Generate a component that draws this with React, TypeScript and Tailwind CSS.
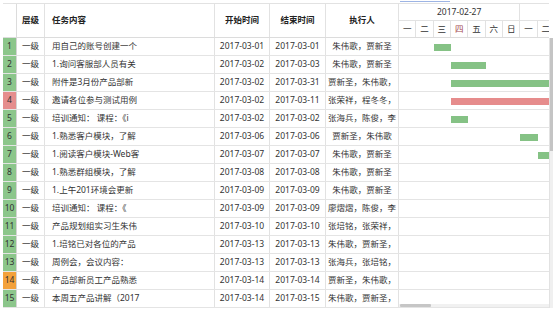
const rows = [
  { n: 1, task: "用自己的账号创建一个", s: "2017-03-01", e: "2017-03-01", who: "朱伟歌，贾新圣", c: "g" },
  { n: 2, task: "1.询问客服部人员有关", s: "2017-03-02", e: "2017-03-03", who: "朱伟歌，贾新圣", c: "g" },
  { n: 3, task: "附件是3月份产品部新", s: "2017-03-02", e: "2017-03-31", who: "贾新圣，朱伟歌，", c: "g" },
  { n: 4, task: "邀请各位参与测试用例", s: "2017-03-02", e: "2017-03-11", who: "张荣祥，程冬冬，", c: "r" },
  { n: 5, task: "培训通知： 课程：《i", s: "2017-03-02", e: "2017-03-02", who: "张海兵，陈俊，李", c: "g" },
  { n: 6, task: "1.熟悉客户模块，了解", s: "2017-03-06", e: "2017-03-06", who: "贾新圣，朱伟歌", c: "g" },
  { n: 7, task: "1.阅读客户模块-Web客", s: "2017-03-07", e: "2017-03-07", who: "朱伟歌，贾新圣", c: "g" },
  { n: 8, task: "1.熟悉群组模块，了解", s: "2017-03-08", e: "2017-03-08", who: "朱伟歌，贾新圣", c: "g" },
  { n: 9, task: "1.上午201环境会更新", s: "2017-03-09", e: "2017-03-09", who: "朱伟歌，贾新圣", c: "g" },
  { n: 10, task: "培训通知： 课程：《", s: "2017-03-09", e: "2017-03-09", who: "廖熠熠，陈俊，李", c: "g" },
  { n: 11, task: "产品规划组实习生朱伟", s: "2017-03-10", e: "2017-03-10", who: "张培铭，张荣祥，", c: "g" },
  { n: 12, task: "1.培铭已对各位的产品", s: "2017-03-13", e: "2017-03-13", who: "朱伟歌，贾新圣，", c: "g" },
  { n: 13, task: "周例会，会议内容：", s: "2017-03-13", e: "2017-03-13", who: "张海兵，张培铭，", c: "g" },
  { n: 14, task: "产品部新员工产品熟悉", s: "2017-03-14", e: "2017-03-14", who: "贾新圣，朱伟歌，", c: "o" },
  { n: 15, task: "本周五产品讲解（2017", s: "2017-03-14", e: "2017-03-15", who: "朱伟歌，贾新圣，", c: "g" },
];

const DAY = 52 / 3;
const days = ["一", "二", "三", "四", "五", "六", "日", "一", "二"];

// days since 2017-02-27
function offset(d: string) {
  const t = new Date(d + "T00:00:00Z").getTime();
  const base = new Date("2017-02-27T00:00:00Z").getTime();
  return Math.round((t - base) / 86400000);
}

const numBg: Record<string, string> = {
  g: "bg-[#8cc68b]",
  r: "bg-[#e58d8d]",
  o: "bg-[#f3a13b]",
};

export default function App() {
  return (
    <div
      className="w-[557px] h-[310px] bg-white overflow-hidden text-[8.5px] text-[#333]"
      style={{ fontFamily: '"Noto Sans", "Noto Sans CJK SC", sans-serif' }}
    >
      <div className="flex pt-[3px] pl-[3px]">
        {/* left grid */}
        <div className="w-[396px] border-t border-[#e2e2e2]">
          <div className="grid grid-cols-[14px_28px_170px_55px_56px_73px] h-[34px] font-bold text-[#222] border-b border-[#dcdcdc]">
            <div className="border-r border-[#dcdcdc]" />
            <div className="flex items-center justify-center border-r border-[#e2e2e2]">层级</div>
            <div className="flex items-center pl-[7px] border-r border-[#e2e2e2]">任务内容</div>
            <div className="flex items-center justify-center border-r border-[#e2e2e2]">开始时间</div>
            <div className="flex items-center justify-center border-r border-[#e2e2e2]">结束时间</div>
            <div className="flex items-center justify-center border-r border-[#e2e2e2]">执行人</div>
          </div>
          {rows.map((r) => (
            <div
              key={r.n}
              className="grid grid-cols-[14px_28px_170px_55px_56px_73px] h-[18px] border-b border-[#e4e4e4]"
            >
              <div className={`flex items-center justify-center border-r border-[#d4d4d4] ${numBg[r.c]}`}>{r.n}</div>
              <div className="flex items-center justify-center border-r border-[#e2e2e2]">一级</div>
              <div className="flex items-center pl-[7px] border-r border-[#e2e2e2] overflow-hidden whitespace-nowrap">{r.task}</div>
              <div className="flex items-center justify-center border-r border-[#e2e2e2]">{r.s}</div>
              <div className="flex items-center justify-center border-r border-[#e2e2e2]">{r.e}</div>
              <div className="flex items-center border-r border-[#e2e2e2] overflow-hidden whitespace-nowrap">
                <span className="w-full text-center px-[1px]">{r.who}</span>
              </div>
            </div>
          ))}
        </div>

        {/* gantt */}
        <div className="w-[154px] flex flex-col relative">
          <div className="absolute top-[-2px] left-[1px] w-[50px] h-[1px] bg-[#9db4e4]" />
          <div className="w-[150px] overflow-hidden border-t border-[#e2e2e2]">
            <div className="flex h-[17px] border-b border-[#e2e2e2] w-[200px]">
              <div className="flex items-center justify-center border-r border-[#e2e2e2]" style={{ width: DAY * 7 }}>
                2017-02-27
              </div>
              <div className="flex-1" />
            </div>
            <div className="flex h-[17px] border-b border-[#dcdcdc] w-[200px]">
              {days.map((d, i) => (
                <div
                  key={i}
                  className={`flex items-center justify-center border-r border-[#e2e2e2] shrink-0 ${i === 3 ? "text-[#a4474d]" : ""}`}
                  style={{ width: DAY }}
                >
                  {d}
                </div>
              ))}
            </div>
          </div>
          <div className="flex">
            <div className="w-[150px] relative overflow-hidden">
              {rows.map((r) => {
                const a = offset(r.s);
                const b = offset(r.e) + 1;
                return (
                  <div key={r.n} className="h-[18px] border-b border-[#e4e4e4] relative">
                    <div
                      className={`absolute top-[6px] h-[7px] ${r.c === "r" ? "bg-[#e68c8c]" : "bg-[#85c285]"}`}
                      style={{ left: a * DAY, width: (b - a) * DAY }}
                    />
                  </div>
                );
              })}
              <div className="absolute left-0 bottom-[1px] w-[150px] h-[3px] bg-[#f1f1f1]">
                <div className="ml-[1px] w-[31px] h-full bg-[#c6c6c6] rounded-[1px]" />
              </div>
            </div>
            <div className="w-[4px] bg-[#f0f0f0] border-l border-[#e2e2e2]">
              <div className="h-[113px] bg-[#c4c4c4]" />
            </div>
          </div>
        </div>
      </div>
    </div>
  );
}
